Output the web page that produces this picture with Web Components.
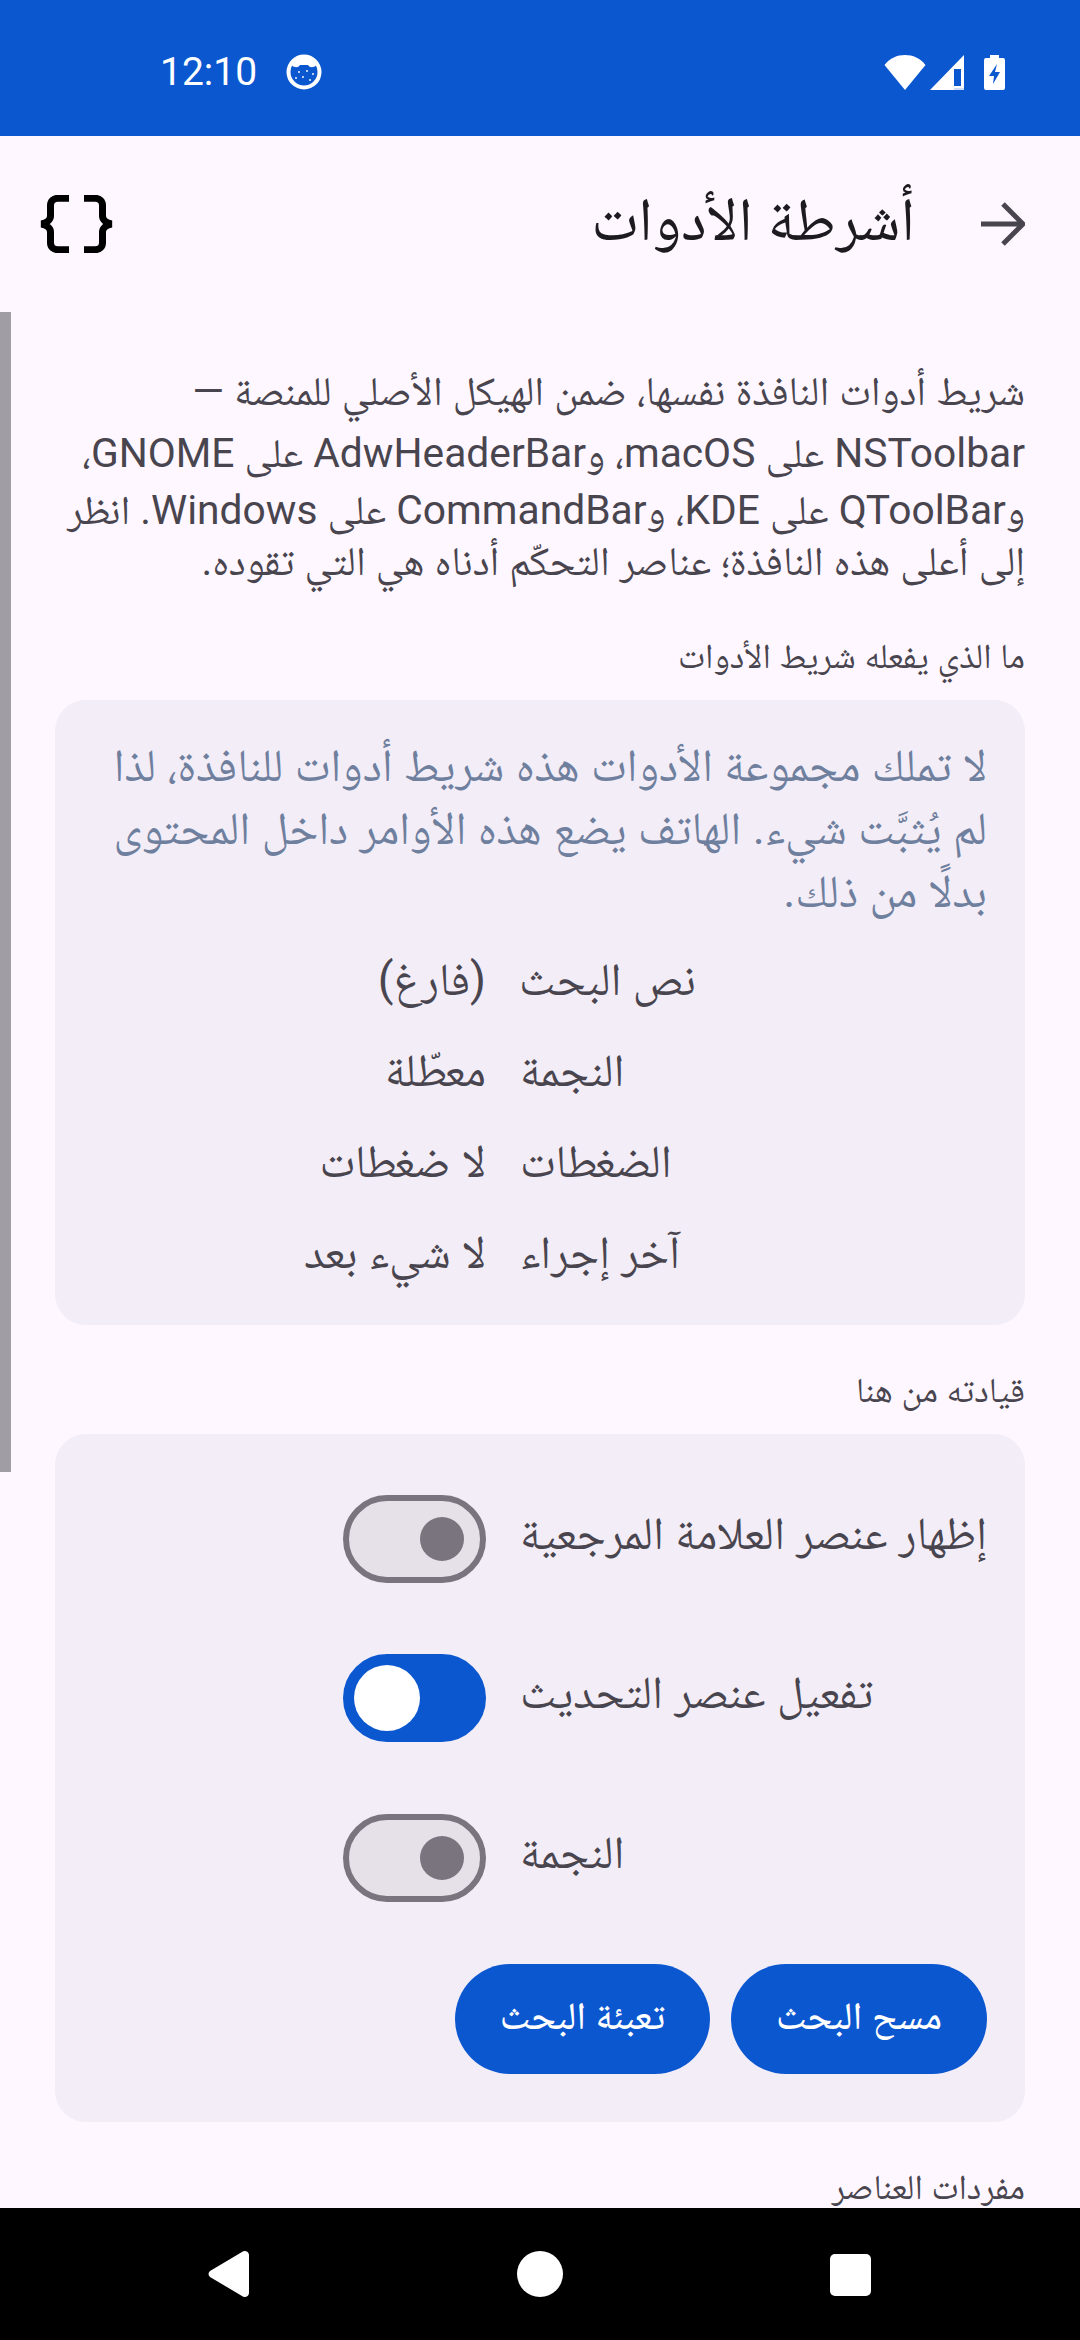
<!DOCTYPE html>
<html lang="ar" dir="rtl">
<head>
<meta charset="utf-8">
<title>أشرطة الأدوات</title>
<style>
  html, body { margin: 0; padding: 0; background: #fef7ff; }
  body { font-family: Roboto, "Noto Naskh Arabic", "Noto Sans", sans-serif; }
</style>
</head>
<body>
<app-screen>
  <status-bar slot="top"></status-bar>
  <app-header slot="top" title="أشرطة الأدوات"></app-header>

  <intro-text>
    <text-line lh="62">شريط أدوات النافذة نفسها، ضمن الهيكل الأصلي للمنصة —</text-line>
    <text-line lh="62">NSToolbar على macOS، وAdwHeaderBar على GNOME،</text-line>
    <text-line lh="52">وQToolBar على KDE، وCommandBar على Windows. انظر</text-line>
    <text-line lh="50">إلى أعلى هذه النافذة؛ عناصر التحكّم أدناه هي التي تقوده.</text-line>
  </intro-text>

  <section-label>ما الذي يفعله شريط الأدوات</section-label>
  <info-card>
    <note-text>لا تملك مجموعة الأدوات هذه شريط أدوات للنافذة، لذا لم يُثبَّت شيء. الهاتف يضع هذه الأوامر داخل المحتوى بدلًا من ذلك.</note-text>
    <kv-row label="نص البحث" value="(فارغ)"></kv-row>
    <kv-row label="النجمة" value="معطّلة"></kv-row>
    <kv-row label="الضغطات" value="لا ضغطات"></kv-row>
    <kv-row label="آخر إجراء" value="لا شيء بعد"></kv-row>
  </info-card>

  <section-label>قيادته من هنا</section-label>
  <info-card controls>
    <switch-row label="إظهار عنصر العلامة المرجعية"></switch-row>
    <switch-row label="تفعيل عنصر التحديث" checked></switch-row>
    <switch-row label="النجمة"></switch-row>
    <button-row>
      <filled-button>مسح البحث</filled-button>
      <filled-button>تعبئة البحث</filled-button>
    </button-row>
  </info-card>

  <section-label>مفردات العناصر</section-label>

  <nav-bar slot="bottom"></nav-bar>
</app-screen>

<script>
const define = (name, css, html) => {
  customElements.define(name, class extends HTMLElement {
    constructor() {
      super();
      this.attachShadow({ mode: "open" });
    }
    connectedCallback() {
      const markup = typeof html === "function" ? html(this) : html;
      this.shadowRoot.innerHTML = `<style>${css}</style>${markup}`;
    }
  });
};

define("app-screen", `
  :host { display: flex; flex-direction: column; width: 1080px; height: 2340px; overflow: hidden; position: relative; background: #fef7ff; }
  .scroll { flex: 1; min-height: 0; overflow: hidden; padding: 0 55px; display: flex; flex-direction: column; }
  .thumb { position: absolute; left: 0; top: 312px; width: 11px; height: 1160px; background: #a19da5; }
`, `
  <slot name="top"></slot>
  <div class="scroll"><slot></slot></div>
  <slot name="bottom"></slot>
  <div class="thumb"></div>
`);

define("status-bar", `
  :host { display: flex; direction: ltr; align-items: center; height: 136px; flex: none; background: #0b57d0; color: #fff; padding: 8px 75px 0 160px; box-sizing: border-box; }
  .time { font: 400 39px Roboto, sans-serif; }
  .face { width: 36px; height: 36px; margin-left: 29px; }
  .icons { margin-left: auto; display: flex; align-items: center; }
  svg { display: block; }
`, `
  <span class="time">12:10</span>
  <svg class="face" viewBox="0 0 36 36">
    <circle cx="18" cy="18" r="15.5" fill="none" stroke="#fff" stroke-width="4"/>
    <path d="M5 11c4 3 7 3 9 0h8c2 3 5 3 9 0l-4-7-9-2-9 2z" fill="#fff"/>
    <path d="M12 17h2v2h-2zM20 16h2v2h-2zM26 19h2v2h-2zM16 22h2v2h-2zM9 23h2v2H9zM23 25h2v2h-2z" fill="#fff" opacity=".7"/>
  </svg>
  <div class="icons">
    <svg width="42" height="35" viewBox="0 0 42 35" style="margin-right:4px"><path d="M21 35 .5 10C6 3 13 0 21 0s15 3 20.500 10z" fill="#fff"/></svg>
    <svg width="34" height="35" viewBox="0 0 34 35" style="margin-right:20px"><path d="M34 0v35H0z" fill="#fff"/><path d="M24 14h7v17h-7z" fill="#0b57d0"/><path d="M24 33h10v2H24z" fill="#cfdcf5"/></svg>
    <svg width="21" height="35" viewBox="0 0 21 35"><path d="M6 0h9v3h4a2 2 0 0 1 2 2v28a2 2 0 0 1-2 2H2a2 2 0 0 1-2-2V5a2 2 0 0 1 2-2h4z" fill="#fff"/><path d="M13 9 5 21h5l-1 8 7-12h-5z" fill="#0b57d0"/></svg>
  </div>
`);

define("app-header", `
  :host { display: flex; align-items: center; height: 176px; flex: none; box-sizing: border-box; color: #1d1b20; }
  .back { width: 44px; height: 44px; margin-right: 55px; flex: none; }
  h1 { font: 400 61px/1.2 Roboto, "Noto Naskh Arabic", sans-serif; margin: 0 66px 8px 0; }
  .code { margin-right: auto; margin-left: 40px; width: 73px; height: 58px; flex: none; }
  svg { display: block; }
`, (el) => `
  <svg class="back" viewBox="0 0 44 44"><path d="M0 22h41M22 2l20 20-20 20" fill="none" stroke="#49454f" stroke-width="5"/></svg>
  <h1>${el.getAttribute("title")}</h1>
  <svg class="code" viewBox="0 0 73 58" fill="none" stroke="#000" stroke-width="7">
    <path d="M29 3.300H18c-4.500 0-7.500 3-7.500 7V21c0 4-4 7-9 8 5 1 9 4 9 8v10.700c0 4 3 7 7.500 7H29"/>
    <path d="M44 3.300h11c4.500 0 7.500 3 7.500 7V21c0 4 4 7 9 8-5 1-9 4-9 8v10.700c0 4-3 7-7.500 7H44"/>
  </svg>
`);

define("intro-text", `
  :host { display: block; flex: none; padding: 48px 0 5px; color: #49454f; font-size: 40.750px; }
`, `<slot></slot>`);

// the reference's wrapped lines aren't evenly spaced, so each line sets its own height
define("text-line", `
  :host { display: block; white-space: nowrap; }
`, (el) => {
  el.style.lineHeight = el.getAttribute("lh") + "px";
  return `<slot></slot>`;
});

define("section-label", `
  :host { display: block; flex: none; color: #49454f; font-size: 35px; line-height: 42px; margin-top: 45px; }
`, `<slot></slot>`);

define("info-card", `
  :host { display: flex; flex-direction: column; flex: none; margin-top: 22px; padding: 34px 38px 23px; background: #f3edf7; border-radius: 31px; }
  :host([controls]) { padding: 25px 38px 48px; }
`, `<slot></slot>`);

define("note-text", `
  :host { display: block; color: #6f7f9e; font-size: 46px; line-height: 63px; margin-bottom: 15px; }
`, `<slot></slot>`);

define("kv-row", `
  :host { display: flex; align-items: center; height: 91px; box-sizing: border-box; padding: 3px 291px 0 0; color: #49454f; font-size: 46px; }
  .k { width: 176px; margin-left: 34px; flex: none; text-align: left; white-space: nowrap; }
  .v { flex: none; }
`, (el) => `<span class="k">${el.getAttribute("label")}</span><span class="v">${el.getAttribute("value")}</span>`);

define("switch-row", `
  :host { display: flex; align-items: center; height: 159.500px; color: #49454f; font-size: 46px; }
  .label { width: 467px; margin-left: 34px; flex: none; white-space: nowrap; text-align: left; }
  .track { position: relative; width: 143px; height: 88px; box-sizing: border-box; border-radius: 44px; background: #e6e0e9; border: 6px solid #79747e; flex: none; }
  .knob { position: absolute; top: 16px; left: 71px; width: 44px; height: 44px; border-radius: 50%; background: #79747e; }
  :host([checked]) .track { background: #0b57d0; border-color: #0b57d0; }
  :host([checked]) .knob { background: #fff; top: 5px; left: 5px; width: 66px; height: 66px; }
`, (el) => `<span class="label">${el.getAttribute("label")}</span><span class="track"><span class="knob"></span></span>`);

define("button-row", `
  :host { display: flex; gap: 21px; margin-top: 26px; justify-content: flex-start; }
`, `<slot></slot>`);

define("filled-button", `
  :host { display: flex; align-items: center; justify-content: center; height: 110px; box-sizing: border-box; padding: 3px 45px 0; border-radius: 55px; background: #0b57d0; color: #fff; font-size: 38.500px; font-weight: 500; }
`, `<slot></slot>`);

define("nav-bar", `
  :host { display: flex; direction: ltr; flex: none; height: 132px; background: #000; position: relative; z-index: 1; }
  svg { position: absolute; top: 0; left: 0; }
`, `
  <svg width="1080" height="132" viewBox="0 0 1080 132" fill="#fff">
    <path d="M242 44c2-2 7-1 7 3v38c0 4-5 5-7 3l-32-19c-2-2-2-4 0-6z"/>
    <circle cx="540" cy="66" r="23"/>
    <rect x="830" y="46" width="41" height="42" rx="5"/>
  </svg>
`);
</script>
</body>
</html>
